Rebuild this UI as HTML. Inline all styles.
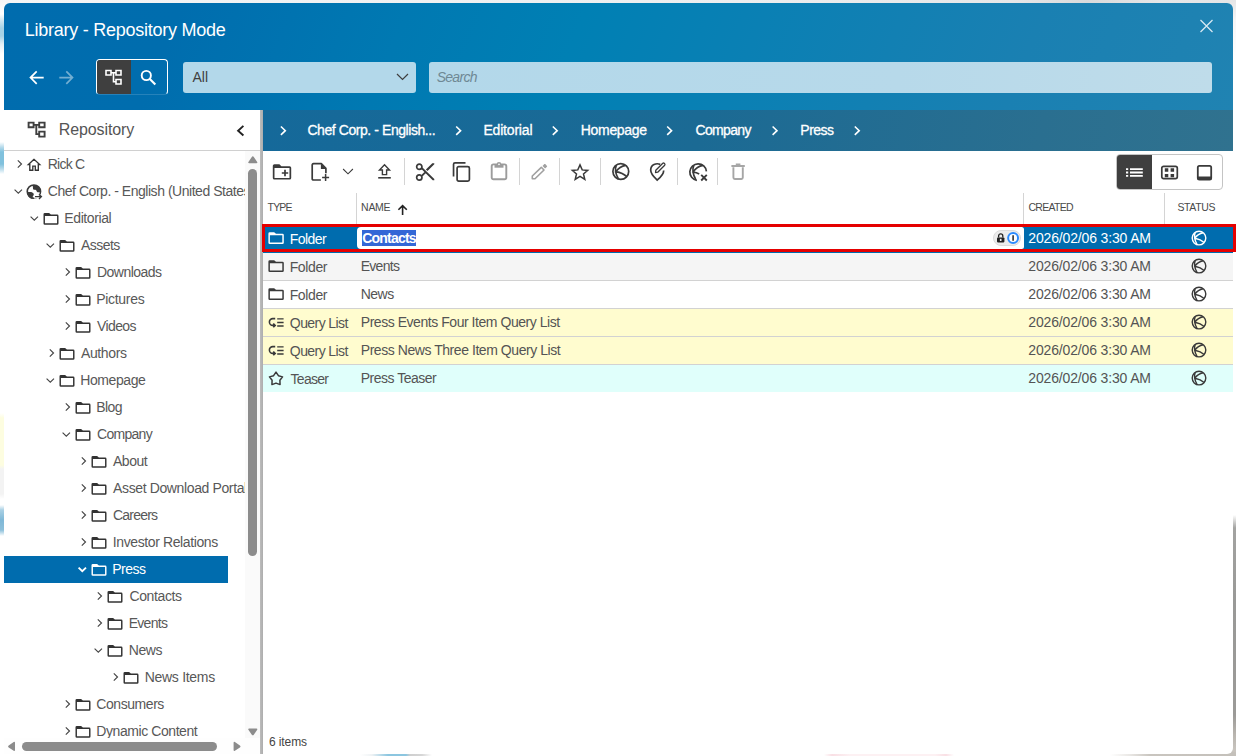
<!DOCTYPE html>
<html lang="en">
<head>
<meta charset="utf-8">
<title>Library - Repository Mode</title>
<style>
*{box-sizing:border-box;margin:0;padding:0}
html,body{width:1236px;height:756px;overflow:hidden;background:#fff;font-family:"Liberation Sans",sans-serif;color:#3f3f3f}
body{position:relative}
.a,.t{position:absolute}
.t{white-space:nowrap}
svg{display:block;overflow:visible;position:absolute}
#bgL{left:0;top:0;width:6px;height:756px;background:linear-gradient(180deg,#f4f5f6 0,#ffffff 14px,#d5e9f2 20px,#a6d2e6 28px,#a6d2e6 36px,#e3eff5 44px,#ffffff 54px,#ffffff 142px,#b9dcec 147px,#80c1dd 152px,#80c1dd 164px,#b9dcec 169px,#ffffff 174px,#ffffff 413px,#fdfde0 418px,#fdfde0 465px,#f3f3f3 469px,#f3f3f3 494px,#ffffff 499px,#ffffff 505px,#a9d0e4 510px,#7fb8d7 520px,#8dc0db 530px,#ffffff 536px,#ffffff 100%)}
#bgT{left:0;top:0;width:1236px;height:5px;background:linear-gradient(90deg,#f4f5f6 0,#eceeef 60%,#e6e7e8 82%,#d9dadb 88%,#e6e7e8 94%,#e4e5e6 100%)}
#bgR{left:1230px;top:0;width:6px;height:756px;background:linear-gradient(180deg,#e4e5e6 0,#f6f6f6 20px,#ffffff 60px,#ffffff 515px,#a3a3a1 528px,#999997 600px,#9b9a97 715px,#b9b5af 735px,#c8c4be 750px,#c8c4be 100%)}
#bgB{left:0;top:752px;width:1236px;height:4px;background:linear-gradient(90deg,#ffffff 0,#ffffff 360px,#eef2f4 372px,#8cc6e0 388px,#8cc6e0 406px,#cfcfcf 410px,#d6d6d6 422px,#ffffff 432px,#ffffff 824px,#f9dfe4 832px,#fdf1f3 850px,#fdf1f3 935px,#f9dfe4 946px,#ffffff 954px,#ffffff 1110px,#e9e7e4 1130px,#c9c5bf 1150px,#c4c0ba 1236px)}
#dlg{left:4px;top:3px;width:1229px;height:751px;border-radius:6px;background:#fff;overflow:hidden}
#hdr{left:0;top:0;width:1229px;height:107px;background:linear-gradient(112deg,#006cae 0%,#006dae 14%,#0079b2 32%,#0080b4 46%,#0a80b4 60%,#1a80b2 82%,#2083b2 100%)}
#bc{left:259.4px;top:107px;width:970px;height:41px;background:linear-gradient(100deg,#15699a 0%,#1b6a94 45%,#2a6f90 80%,#30728f 100%)}
#split{left:256.4px;top:107px;width:3px;height:644px;background:linear-gradient(90deg,#bdbdbd,#adadad)}
#title{font-size:18px;line-height:22px;color:#fff}
.hico{stroke:#fff;fill:none;stroke-width:1.7}
#tgl{left:96px;top:59px;width:72px;height:36px;border:1px solid #fff;border-bottom-color:rgba(255,255,255,.15);border-radius:4px;overflow:hidden}
#tgl .on{left:0;top:0;width:34px;height:34px;background:#3f3f3f}
#cmb{left:183px;top:62px;width:233px;height:31px;background:#b3d8ea;border-radius:3px}
#srch{left:429px;top:62px;width:783px;height:31px;background:linear-gradient(90deg,#b3d8ea 0%,#b7d9ea 60%,#bfdcea 100%);border-radius:3px}
.f14{font-size:14px;line-height:17px}
#lphb{left:4px;top:150px;width:256px;height:1px;background:#d0d0d0}
.bct{font-size:14px;line-height:17px;color:#fff;-webkit-text-stroke:0.3px #fff;top:122px}
.bca{top:125.7px}
/* tree */
#tree{left:4px;top:151px;width:241px;height:587px;overflow:hidden}
.tr{font-size:14px;line-height:27px;height:27px;color:#585858}
#sel{left:0;top:405px;width:224px;height:27px;background:#006cae}
.ar{fill:none;stroke:#444;stroke-width:1.15}
.fo{fill:#333}
/* scrollbars */
#vs{left:245px;top:151px;width:15px;height:587px;background:#fafafa}
#hs{left:4px;top:738px;width:256px;height:16px;background:#fefefe}
.sb{background:#8c8c8c;border-radius:5px}
/* table */
.th{font-size:10.5px;line-height:13px;color:#4a4a4a;top:201px}
.vsep{width:1px;background:#d4d4d4}
.row{left:263px;width:970px;height:28px}
.rl{left:263px;width:970px;height:1px;background:#d2d2d2}
.td{font-size:14px;line-height:17px;color:#545454}
.ti{fill:none;stroke:#3a3a3a;stroke-width:1.5}
.gl{fill:none;stroke:#3a3a3a;stroke-width:1.25}
</style>
</head>
<body>
<div id="bgT" class="a"></div><div id="bgL" class="a"></div><div id="bgR" class="a"></div><div id="bgB" class="a"></div>
<div id="dlg" class="a"><div id="hdr" class="a"></div><div id="bc" class="a"></div><div id="split" class="a"></div></div>
<div id="title" class="t"  style="left:24.64px;top:19px;letter-spacing:-0.246px;">Library - Repository Mode</div>
<svg style="left:28px;top:69px" width="18" height="18" viewBox="0 0 18 18"><g transform="translate(0.70 0.60)"><path class="hico" d="M15 8H2.2M8 1.8L1.8 8L8 14.2"/></g></svg>
<svg style="left:58px;top:69px" width="18" height="18" viewBox="0 0 18 18" opacity=".45"><g transform="translate(0.30 0.60)"><path class="hico" d="M1 8H13.8M8 1.8L14.2 8L8 14.2"/></g></svg>
<div id="tgl" class="a"><div class="on a"></div><svg style="left:8px;top:9px" width="18" height="18" viewBox="0 0 18 18"><path fill="none" stroke="#fff" stroke-width="1.6" d="M1 1.5h5v4.5h-5zM11 1.5h5v4.5h-5zM11 10.5h5v4.5h-5zM6 3.75h5M8.5 3.75v9h2.5"/></svg><svg style="left:42px;top:9px" width="19" height="18" viewBox="0 0 19 18"><g transform="translate(0.80 0.00)"><circle cx="6.5" cy="6.5" r="4.6" fill="none" stroke="#fff" stroke-width="1.9"/><path d="M10 10L15.5 15.5" stroke="#fff" stroke-width="2.1" fill="none"/></g></svg></div>
<div id="cmb" class="a"></div><div id="srch" class="a"></div>
<div id="all" class="t f14" style="left:192.50px;top:69px;letter-spacing:0.000px;">All</div>
<svg style="left:396px;top:73px" width="14" height="9" viewBox="0 0 14 9"><path d="M1 1l5.5 5.5L12 1" fill="none" stroke="#3f3f3f" stroke-width="1.2"/></svg>
<div id="search" class="t f14" style="left:436.70px;top:69px;letter-spacing:-0.720px;color:#6f8894;font-style:italic;">Search</div>
<svg style="left:1200px;top:19px" width="14" height="15" viewBox="0 0 14 15"><g transform="translate(0.00 0.50)"><path d="M0.5 0.5l12 12M12.5 0.5l-12 12" stroke="#d6e9f3" stroke-width="1.25" fill="none"/></g></svg>
<svg style="left:27px;top:121px" width="20" height="18" viewBox="0 0 20 18"><g transform="translate(0.60 0.60)"><path fill="none" stroke="#3f3f3f" stroke-width="1.9" d="M1 1h5v4.6h-5zM11.6 1h5.4v4.6h-5.4zM11.6 10h5.4v5h-5.4zM6 3.3h5.6M8.7 3.3v9.2h2.9"/></g></svg>
<div id="repo" class="t" style="left:58.82px;top:120px;letter-spacing:-0.116px;font-size:16px;line-height:20px;color:#555;">Repository</div>
<svg style="left:236px;top:125px" width="10" height="13" viewBox="0 0 10 13"><g transform="translate(0.50 0.20)"><path d="M6.9 0.7L1.6 5.5l5.3 4.8" fill="none" stroke="#222" stroke-width="1.9"/></g></svg>
<div id="lphb" class="a"></div>
<svg style="left:279px;top:125px" width="9" height="12" viewBox="0 0 9 12"><g transform="translate(0.90 0.70)"><path d="M1 0.8L5.4 5L1 9.2" fill="none" stroke="#fff" stroke-width="1.6"/></g></svg>
<svg style="left:455px;top:125px" width="9" height="12" viewBox="0 0 9 12"><g transform="translate(0.20 0.70)"><path d="M1 0.8L5.4 5L1 9.2" fill="none" stroke="#fff" stroke-width="1.6"/></g></svg>
<svg style="left:551px;top:125px" width="9" height="12" viewBox="0 0 9 12"><g transform="translate(0.80 0.70)"><path d="M1 0.8L5.4 5L1 9.2" fill="none" stroke="#fff" stroke-width="1.6"/></g></svg>
<svg style="left:666px;top:125px" width="9" height="12" viewBox="0 0 9 12"><g transform="translate(0.20 0.70)"><path d="M1 0.8L5.4 5L1 9.2" fill="none" stroke="#fff" stroke-width="1.6"/></g></svg>
<svg style="left:771px;top:125px" width="9" height="12" viewBox="0 0 9 12"><g transform="translate(0.60 0.70)"><path d="M1 0.8L5.4 5L1 9.2" fill="none" stroke="#fff" stroke-width="1.6"/></g></svg>
<svg style="left:853px;top:125px" width="9" height="12" viewBox="0 0 9 12"><g transform="translate(0.80 0.70)"><path d="M1 0.8L5.4 5L1 9.2" fill="none" stroke="#fff" stroke-width="1.6"/></g></svg>
<div id="bc1" class="t bct" style="left:307.44px;top:122px;letter-spacing:-0.431px;">Chef Corp. - English...</div>
<div id="bc2" class="t bct" style="left:483.38px;top:122px;letter-spacing:-0.180px;">Editorial</div>
<div id="bc3" class="t bct" style="left:580.82px;top:122px;letter-spacing:-0.330px;">Homepage</div>
<div id="bc4" class="t bct" style="left:695.56px;top:122px;letter-spacing:-0.666px;">Company</div>
<div id="bc5" class="t bct" style="left:800.32px;top:122px;letter-spacing:-0.520px;">Press</div>
<div id="tree" class="a"><div id="sel" class="a"></div><svg style="left:13px;top:9px" width="7" height="9" viewBox="0 0 7 9"><g transform="translate(0.20 0.00)"><path class="ar" d="M0.6 0.4L4.3 4L0.6 7.6"/></g></svg><svg style="left:22px;top:7px" width="17" height="14" viewBox="0 0 17 14"><g transform="translate(0.80 0.40)"><path fill="none" stroke="#333" stroke-width="1.35" stroke-linejoin="miter" d="M7.25 0.95L1.6 6.1H3V11.8H6V7.7H8.5V11.8H11.5V6.1H12.9Z"/></g></svg><div id="tr0" class="t tr" style="left:43.70px;top:-0.5px;letter-spacing:-0.752px;">Rick C</div><svg style="left:10px;top:38px" width="10" height="6" viewBox="0 0 10 6"><g transform="translate(0.30 0.10)"><path class="ar" d="M0.3 0.5L4 4L7.7 0.5"/></g></svg><svg style="left:22px;top:33px" width="18" height="17" viewBox="0 0 18 17"><g transform="translate(0.40 0.00)"><circle cx="7.5" cy="7.6" r="6.7" fill="#fff" stroke="#3a3a3a" stroke-width="1.5"/><path fill="#3a3a3a" d="M6.6 1.2C10.8 0.6 14.4 3.6 14.6 8.2H11.2C10.6 8.2 10.4 7.6 10.2 7C10 6.2 9.2 5.8 8.2 5.8C7 5.8 6.4 5 6.6 4.2C6.8 3.4 6 2.6 6.6 1.2Z"/><path fill="#3a3a3a" d="M0.6 7.4C2 8 3.4 7.6 4.8 8C6.2 8.4 7.6 9.2 7.4 10.6C7.2 11.8 6.2 12.2 6.2 13.4C6.2 14 6.4 14.6 6.6 15C2.8 14.4 0.2 11 0.6 7.4Z"/><path fill="#fff" d="M7.8 10.8H16V14.6H7.8Z"/><path fill="none" stroke="#3a3a3a" stroke-width="1.35" d="M8.6 12.6H15M12.6 10.4L15 12.6L12.6 14.9"/></g></svg><div id="tr1" class="t tr" style="left:43.82px;top:26.5px;letter-spacing:-0.470px;">Chef Corp. - English (United States)</div><svg style="left:26px;top:65px" width="10" height="6" viewBox="0 0 10 6"><g transform="translate(0.30 0.10)"><path class="ar" d="M0.3 0.5L4 4L7.7 0.5"/></g></svg><svg style="left:39px;top:62px" width="17" height="13" viewBox="0 0 17 13"><g transform="translate(0.50 0.00)"><path fill="#333" fill-rule="evenodd" d="M0 1.3Q0 0 1.3 0H5.6L7.4 1.6H13.7Q15 1.6 15 2.9V10.5Q15 11.8 13.7 11.8H1.3Q0 11.8 0 10.5ZM1.45 3.1V10.35H13.55V3.1Z"/></g></svg><div id="tr2" class="t tr" style="left:60.32px;top:53.5px;letter-spacing:-0.400px;">Editorial</div><svg style="left:42px;top:92px" width="10" height="6" viewBox="0 0 10 6"><g transform="translate(0.30 0.10)"><path class="ar" d="M0.3 0.5L4 4L7.7 0.5"/></g></svg><svg style="left:55px;top:89px" width="17" height="13" viewBox="0 0 17 13"><g transform="translate(0.50 0.00)"><path fill="#333" fill-rule="evenodd" d="M0 1.3Q0 0 1.3 0H5.6L7.4 1.6H13.7Q15 1.6 15 2.9V10.5Q15 11.8 13.7 11.8H1.3Q0 11.8 0 10.5ZM1.45 3.1V10.35H13.55V3.1Z"/></g></svg><div id="tr3" class="t tr" style="left:77.06px;top:80.5px;letter-spacing:-0.560px;">Assets</div><svg style="left:61px;top:117px" width="7" height="9" viewBox="0 0 7 9"><g transform="translate(0.20 0.00)"><path class="ar" d="M0.6 0.4L4.3 4L0.6 7.6"/></g></svg><svg style="left:71px;top:116px" width="17" height="13" viewBox="0 0 17 13"><g transform="translate(0.50 0.00)"><path fill="#333" fill-rule="evenodd" d="M0 1.3Q0 0 1.3 0H5.6L7.4 1.6H13.7Q15 1.6 15 2.9V10.5Q15 11.8 13.7 11.8H1.3Q0 11.8 0 10.5ZM1.45 3.1V10.35H13.55V3.1Z"/></g></svg><div id="tr4" class="t tr" style="left:92.94px;top:107.5px;letter-spacing:-0.520px;">Downloads</div><svg style="left:61px;top:144px" width="7" height="9" viewBox="0 0 7 9"><g transform="translate(0.20 0.00)"><path class="ar" d="M0.6 0.4L4.3 4L0.6 7.6"/></g></svg><svg style="left:71px;top:143px" width="17" height="13" viewBox="0 0 17 13"><g transform="translate(0.50 0.00)"><path fill="#333" fill-rule="evenodd" d="M0 1.3Q0 0 1.3 0H5.6L7.4 1.6H13.7Q15 1.6 15 2.9V10.5Q15 11.8 13.7 11.8H1.3Q0 11.8 0 10.5ZM1.45 3.1V10.35H13.55V3.1Z"/></g></svg><div id="tr5" class="t tr" style="left:92.26px;top:134.5px;letter-spacing:-0.308px;">Pictures</div><svg style="left:61px;top:171px" width="7" height="9" viewBox="0 0 7 9"><g transform="translate(0.20 0.00)"><path class="ar" d="M0.6 0.4L4.3 4L0.6 7.6"/></g></svg><svg style="left:71px;top:170px" width="17" height="13" viewBox="0 0 17 13"><g transform="translate(0.50 0.00)"><path fill="#333" fill-rule="evenodd" d="M0 1.3Q0 0 1.3 0H5.6L7.4 1.6H13.7Q15 1.6 15 2.9V10.5Q15 11.8 13.7 11.8H1.3Q0 11.8 0 10.5ZM1.45 3.1V10.35H13.55V3.1Z"/></g></svg><div id="tr6" class="t tr" style="left:93.06px;top:161.5px;letter-spacing:-0.624px;">Videos</div><svg style="left:45px;top:198px" width="7" height="9" viewBox="0 0 7 9"><g transform="translate(0.20 0.00)"><path class="ar" d="M0.6 0.4L4.3 4L0.6 7.6"/></g></svg><svg style="left:55px;top:197px" width="17" height="13" viewBox="0 0 17 13"><g transform="translate(0.50 0.00)"><path fill="#333" fill-rule="evenodd" d="M0 1.3Q0 0 1.3 0H5.6L7.4 1.6H13.7Q15 1.6 15 2.9V10.5Q15 11.8 13.7 11.8H1.3Q0 11.8 0 10.5ZM1.45 3.1V10.35H13.55V3.1Z"/></g></svg><div id="tr7" class="t tr" style="left:77.06px;top:188.5px;letter-spacing:-0.400px;">Authors</div><svg style="left:42px;top:227px" width="10" height="6" viewBox="0 0 10 6"><g transform="translate(0.30 0.10)"><path class="ar" d="M0.3 0.5L4 4L7.7 0.5"/></g></svg><svg style="left:55px;top:224px" width="17" height="13" viewBox="0 0 17 13"><g transform="translate(0.50 0.00)"><path fill="#333" fill-rule="evenodd" d="M0 1.3Q0 0 1.3 0H5.6L7.4 1.6H13.7Q15 1.6 15 2.9V10.5Q15 11.8 13.7 11.8H1.3Q0 11.8 0 10.5ZM1.45 3.1V10.35H13.55V3.1Z"/></g></svg><div id="tr8" class="t tr" style="left:76.26px;top:215.5px;letter-spacing:-0.423px;">Homepage</div><svg style="left:61px;top:252px" width="7" height="9" viewBox="0 0 7 9"><g transform="translate(0.20 0.00)"><path class="ar" d="M0.6 0.4L4.3 4L0.6 7.6"/></g></svg><svg style="left:71px;top:251px" width="17" height="13" viewBox="0 0 17 13"><g transform="translate(0.50 0.00)"><path fill="#333" fill-rule="evenodd" d="M0 1.3Q0 0 1.3 0H5.6L7.4 1.6H13.7Q15 1.6 15 2.9V10.5Q15 11.8 13.7 11.8H1.3Q0 11.8 0 10.5ZM1.45 3.1V10.35H13.55V3.1Z"/></g></svg><div id="tr9" class="t tr" style="left:92.26px;top:242.5px;letter-spacing:-0.612px;">Blog</div><svg style="left:58px;top:281px" width="10" height="6" viewBox="0 0 10 6"><g transform="translate(0.30 0.10)"><path class="ar" d="M0.3 0.5L4 4L7.7 0.5"/></g></svg><svg style="left:71px;top:278px" width="17" height="13" viewBox="0 0 17 13"><g transform="translate(0.50 0.00)"><path fill="#333" fill-rule="evenodd" d="M0 1.3Q0 0 1.3 0H5.6L7.4 1.6H13.7Q15 1.6 15 2.9V10.5Q15 11.8 13.7 11.8H1.3Q0 11.8 0 10.5ZM1.45 3.1V10.35H13.55V3.1Z"/></g></svg><div id="tr10" class="t tr" style="left:93.06px;top:269.5px;letter-spacing:-0.719px;">Company</div><svg style="left:77px;top:306px" width="7" height="9" viewBox="0 0 7 9"><g transform="translate(0.20 0.00)"><path class="ar" d="M0.6 0.4L4.3 4L0.6 7.6"/></g></svg><svg style="left:87px;top:305px" width="17" height="13" viewBox="0 0 17 13"><g transform="translate(0.50 0.00)"><path fill="#333" fill-rule="evenodd" d="M0 1.3Q0 0 1.3 0H5.6L7.4 1.6H13.7Q15 1.6 15 2.9V10.5Q15 11.8 13.7 11.8H1.3Q0 11.8 0 10.5ZM1.45 3.1V10.35H13.55V3.1Z"/></g></svg><div id="tr11" class="t tr" style="left:109.06px;top:296.5px;letter-spacing:-0.520px;">About</div><svg style="left:77px;top:333px" width="7" height="9" viewBox="0 0 7 9"><g transform="translate(0.20 0.00)"><path class="ar" d="M0.6 0.4L4.3 4L0.6 7.6"/></g></svg><svg style="left:87px;top:332px" width="17" height="13" viewBox="0 0 17 13"><g transform="translate(0.50 0.00)"><path fill="#333" fill-rule="evenodd" d="M0 1.3Q0 0 1.3 0H5.6L7.4 1.6H13.7Q15 1.6 15 2.9V10.5Q15 11.8 13.7 11.8H1.3Q0 11.8 0 10.5ZM1.45 3.1V10.35H13.55V3.1Z"/></g></svg><div id="tr12" class="t tr" style="left:109.06px;top:323.5px;letter-spacing:-0.375px;">Asset Download Portal</div><svg style="left:77px;top:360px" width="7" height="9" viewBox="0 0 7 9"><g transform="translate(0.20 0.00)"><path class="ar" d="M0.6 0.4L4.3 4L0.6 7.6"/></g></svg><svg style="left:87px;top:359px" width="17" height="13" viewBox="0 0 17 13"><g transform="translate(0.50 0.00)"><path fill="#333" fill-rule="evenodd" d="M0 1.3Q0 0 1.3 0H5.6L7.4 1.6H13.7Q15 1.6 15 2.9V10.5Q15 11.8 13.7 11.8H1.3Q0 11.8 0 10.5ZM1.45 3.1V10.35H13.55V3.1Z"/></g></svg><div id="tr13" class="t tr" style="left:109.06px;top:350.5px;letter-spacing:-0.800px;">Careers</div><svg style="left:77px;top:387px" width="7" height="9" viewBox="0 0 7 9"><g transform="translate(0.20 0.00)"><path class="ar" d="M0.6 0.4L4.3 4L0.6 7.6"/></g></svg><svg style="left:87px;top:386px" width="17" height="13" viewBox="0 0 17 13"><g transform="translate(0.50 0.00)"><path fill="#333" fill-rule="evenodd" d="M0 1.3Q0 0 1.3 0H5.6L7.4 1.6H13.7Q15 1.6 15 2.9V10.5Q15 11.8 13.7 11.8H1.3Q0 11.8 0 10.5ZM1.45 3.1V10.35H13.55V3.1Z"/></g></svg><div id="tr14" class="t tr" style="left:108.80px;top:377.5px;letter-spacing:-0.393px;">Investor Relations</div><svg style="left:74px;top:416px" width="10" height="6" viewBox="0 0 10 6"><g transform="translate(0.30 0.10)"><path class="ar" style="stroke:#fff;stroke-width:1.9" d="M0.3 0.5L4 4L7.7 0.5"/></g></svg><svg style="left:87px;top:413px" width="17" height="13" viewBox="0 0 17 13"><g transform="translate(0.50 0.00)"><path fill="#fff" fill-rule="evenodd" d="M0 1.3Q0 0 1.3 0H5.6L7.4 1.6H13.7Q15 1.6 15 2.9V10.5Q15 11.8 13.7 11.8H1.3Q0 11.8 0 10.5ZM1.45 3.1V10.35H13.55V3.1Z"/></g></svg><div id="tr15" class="t tr" style="left:108.20px;top:404.5px;letter-spacing:-0.520px;color:#fff;">Press</div><svg style="left:93px;top:441px" width="7" height="9" viewBox="0 0 7 9"><g transform="translate(0.20 0.00)"><path class="ar" d="M0.6 0.4L4.3 4L0.6 7.6"/></g></svg><svg style="left:103px;top:440px" width="17" height="13" viewBox="0 0 17 13"><g transform="translate(0.50 0.00)"><path fill="#333" fill-rule="evenodd" d="M0 1.3Q0 0 1.3 0H5.6L7.4 1.6H13.7Q15 1.6 15 2.9V10.5Q15 11.8 13.7 11.8H1.3Q0 11.8 0 10.5ZM1.45 3.1V10.35H13.55V3.1Z"/></g></svg><div id="tr16" class="t tr" style="left:125.44px;top:431.5px;letter-spacing:-0.377px;">Contacts</div><svg style="left:93px;top:468px" width="7" height="9" viewBox="0 0 7 9"><g transform="translate(0.20 0.00)"><path class="ar" d="M0.6 0.4L4.3 4L0.6 7.6"/></g></svg><svg style="left:103px;top:467px" width="17" height="13" viewBox="0 0 17 13"><g transform="translate(0.50 0.00)"><path fill="#333" fill-rule="evenodd" d="M0 1.3Q0 0 1.3 0H5.6L7.4 1.6H13.7Q15 1.6 15 2.9V10.5Q15 11.8 13.7 11.8H1.3Q0 11.8 0 10.5ZM1.45 3.1V10.35H13.55V3.1Z"/></g></svg><div id="tr17" class="t tr" style="left:124.64px;top:458.5px;letter-spacing:-0.688px;">Events</div><svg style="left:90px;top:497px" width="10" height="6" viewBox="0 0 10 6"><g transform="translate(0.30 0.10)"><path class="ar" d="M0.3 0.5L4 4L7.7 0.5"/></g></svg><svg style="left:103px;top:494px" width="17" height="13" viewBox="0 0 17 13"><g transform="translate(0.50 0.00)"><path fill="#333" fill-rule="evenodd" d="M0 1.3Q0 0 1.3 0H5.6L7.4 1.6H13.7Q15 1.6 15 2.9V10.5Q15 11.8 13.7 11.8H1.3Q0 11.8 0 10.5ZM1.45 3.1V10.35H13.55V3.1Z"/></g></svg><div id="tr18" class="t tr" style="left:124.64px;top:485.5px;letter-spacing:-0.345px;">News</div><svg style="left:109px;top:522px" width="7" height="9" viewBox="0 0 7 9"><g transform="translate(0.20 0.00)"><path class="ar" d="M0.6 0.4L4.3 4L0.6 7.6"/></g></svg><svg style="left:119px;top:521px" width="17" height="13" viewBox="0 0 17 13"><g transform="translate(0.50 0.00)"><path fill="#333" fill-rule="evenodd" d="M0 1.3Q0 0 1.3 0H5.6L7.4 1.6H13.7Q15 1.6 15 2.9V10.5Q15 11.8 13.7 11.8H1.3Q0 11.8 0 10.5ZM1.45 3.1V10.35H13.55V3.1Z"/></g></svg><div id="tr19" class="t tr" style="left:140.64px;top:512.5px;letter-spacing:-0.277px;">News Items</div><svg style="left:61px;top:549px" width="7" height="9" viewBox="0 0 7 9"><g transform="translate(0.20 0.00)"><path class="ar" d="M0.6 0.4L4.3 4L0.6 7.6"/></g></svg><svg style="left:71px;top:548px" width="17" height="13" viewBox="0 0 17 13"><g transform="translate(0.50 0.00)"><path fill="#333" fill-rule="evenodd" d="M0 1.3Q0 0 1.3 0H5.6L7.4 1.6H13.7Q15 1.6 15 2.9V10.5Q15 11.8 13.7 11.8H1.3Q0 11.8 0 10.5ZM1.45 3.1V10.35H13.55V3.1Z"/></g></svg><div id="tr20" class="t tr" style="left:92.32px;top:539.5px;letter-spacing:-0.440px;">Consumers</div><svg style="left:61px;top:576px" width="7" height="9" viewBox="0 0 7 9"><g transform="translate(0.20 0.00)"><path class="ar" d="M0.6 0.4L4.3 4L0.6 7.6"/></g></svg><svg style="left:71px;top:575px" width="17" height="13" viewBox="0 0 17 13"><g transform="translate(0.50 0.00)"><path fill="#333" fill-rule="evenodd" d="M0 1.3Q0 0 1.3 0H5.6L7.4 1.6H13.7Q15 1.6 15 2.9V10.5Q15 11.8 13.7 11.8H1.3Q0 11.8 0 10.5ZM1.45 3.1V10.35H13.55V3.1Z"/></g></svg><div id="tr21" class="t tr" style="left:92.32px;top:566.5px;letter-spacing:-0.426px;">Dynamic Content</div></div>
<div id="vs" class="a"></div><div id="hs" class="a"></div>
<svg style="left:248px;top:156px" width="11" height="9" viewBox="0 0 11 9"><path fill="#8c8c8c" d="M4.8 0.3Q5.4 0.3 5.8 0.9L9.2 5.9Q9.8 7.2 8.4 7.2H1.2Q-0.2 7.2 0.4 5.9L3.8 0.9Q4.2 0.3 4.8 0.3Z"/></svg>
<svg style="left:248px;top:728px" width="11" height="9" viewBox="0 0 11 9"><g transform="translate(0.00 0.20)"><path fill="#8c8c8c" d="M4.8 7.1Q5.4 7.1 5.8 6.5L9.2 1.5Q9.8 0.2 8.4 0.2H1.2Q-0.2 0.2 0.4 1.5L3.8 6.5Q4.2 7.1 4.8 7.1Z"/></g></svg>
<div class="a sb" style="left:248.2px;top:169px;width:9.3px;height:387px"></div>
<svg style="left:7px;top:741px" width="10" height="12" viewBox="0 0 10 12"><g transform="translate(0.80 0.60)"><path fill="#8c8c8c" d="M0.3 4.8Q0.3 4.2 0.9 3.8L5.9 0.4Q7.2 -0.2 7.2 1.2V8.4Q7.2 9.8 5.9 9.2L0.9 5.8Q0.3 5.4 0.3 4.8Z"/></g></svg>
<svg style="left:233px;top:741px" width="9" height="12" viewBox="0 0 9 12"><g transform="translate(0.20 0.60)"><path fill="#8c8c8c" d="M7.3 4.8Q7.3 4.2 6.7 3.8L1.7 0.4Q0.4 -0.2 0.4 1.2V8.4Q0.4 9.8 1.7 9.2L6.7 5.8Q7.3 5.4 7.3 4.8Z"/></g></svg>
<div class="a sb" style="left:21.8px;top:742.2px;width:194.8px;height:8.4px"></div>
<div class="a vsep" style="left:404px;top:158px;height:27px"></div>
<div class="a vsep" style="left:519px;top:158px;height:27px"></div>
<div class="a vsep" style="left:559px;top:158px;height:27px"></div>
<div class="a vsep" style="left:600px;top:158px;height:27px"></div>
<div class="a vsep" style="left:677px;top:158px;height:27px"></div>
<div class="a vsep" style="left:717px;top:158px;height:27px"></div>
<svg style="left:272px;top:164px" width="21" height="17" viewBox="0 0 21 17"><g transform="translate(0.80 0.20)"><path fill="#3a3a3a" fill-rule="evenodd" d="M0 1.6Q0 0 1.6 0H6.6L8.6 2H16.8Q18.4 2 18.4 3.6V13.8Q18.4 15.4 16.8 15.4H1.6Q0 15.4 0 13.8ZM1.7 3.7V13.7H16.7V3.7Z"/><path stroke="#3a3a3a" stroke-width="1.7" fill="none" d="M9 8.8H15.4M12.2 5.6V12"/></g></svg>
<svg style="left:311px;top:162px" width="20" height="21" viewBox="0 0 20 21"><g transform="translate(0.30 0.80)"><path fill="none" stroke="#3a3a3a" stroke-width="1.7" stroke-linejoin="round" d="M9.6 17.2H2.2Q0.9 17.2 0.9 15.9V2.2Q0.9 0.9 2.2 0.9H10L14.6 5.5V10.4"/><path fill="#3a3a3a" d="M9.6 0.9L14.9 6.2H9.6Z"/><path stroke="#3a3a3a" stroke-width="1.5" fill="none" d="M10.8 14.8H17.8M14.3 11.3V18.3"/></g></svg>
<svg style="left:342px;top:168px" width="13" height="8" viewBox="0 0 13 8"><g transform="translate(0.70 0.60)"><path fill="none" stroke="#3a3a3a" stroke-width="1.05" d="M0.4 0.4L5.3 5.2L10.2 0.4"/></g></svg>
<svg style="left:378px;top:163px" width="14" height="17" viewBox="0 0 14 17"><g transform="translate(0.20 0.80)"><path fill="none" stroke="#3a3a3a" stroke-width="1.4" stroke-linejoin="miter" d="M6.3 1L11.3 6.2H8.4V10.8H4.2V6.2H1.3Z"/><path stroke="#3a3a3a" stroke-width="1.6" d="M0 14H12.6"/></g></svg>
<svg style="left:415px;top:162px" width="21" height="21" viewBox="0 0 21 21"><g transform="translate(0.60 0.80)"><g fill="none" stroke="#3a3a3a" stroke-width="1.7"><circle cx="3.7" cy="4" r="2.65"/><circle cx="3.7" cy="14.7" r="2.65"/></g><path fill="#3a3a3a" d="M5.5 6L6.9 4.7L18.7 16.3V17.5H17.1ZM10.3 6.7L16.7 0.5H18.7V1.5L11.9 8.3ZM5.5 12.5L8.8 9.2L10.1 10.5L6.9 13.8Z"/></g></svg>
<svg style="left:452px;top:162px" width="20" height="21" viewBox="0 0 20 21"><g transform="translate(0.70 0.00)"><g fill="none" stroke="#3a3a3a" stroke-width="1.7"><rect x="4.4" y="4.6" width="12.3" height="14.5" rx="1.6"/><path d="M0.85 14.4V2.3Q0.85 0.85 2.3 0.85H12.8"/></g></g></svg>
<svg style="left:490px;top:161px" width="19" height="21" viewBox="0 0 19 21"><g transform="translate(0.60 0.40)"><rect x="1.1" y="3" width="14.6" height="14.9" rx="1.8" fill="none" stroke="#9c9c9c" stroke-width="1.9"/><path fill="#9c9c9c" d="M3.9 3H12.9V6.3H3.9Z"/><circle cx="8.4" cy="2.9" r="1.6" fill="#fff" stroke="#9c9c9c" stroke-width="1.5"/></g></svg>
<svg style="left:531px;top:163px" width="18" height="18" viewBox="0 0 18 18"><g transform="translate(0.30 0.30)"><path fill="none" stroke="#a0a0a0" stroke-width="1.6" stroke-linejoin="round" d="M1 15.5V12.7L10 4L12.7 6.7L3.7 15.5Z"/><path fill="#a0a0a0" d="M11.2 2.7L13.1 0.8Q13.5 0.4 13.9 0.8L15.7 2.6Q16.1 3 15.7 3.4L13.8 5.3Z"/></g></svg>
<svg style="left:571px;top:163px" width="19" height="19" viewBox="0 0 19 19"><g transform="translate(0.00 0.30)"><path fill="none" stroke="#3a3a3a" stroke-width="1.5" stroke-linejoin="miter" d="M9 1.6L11.2 6.6L16.7 7.1L12.5 10.7L13.8 16L9 13.1L4.2 16L5.5 10.7L1.3 7.1L6.8 6.6Z"/></g></svg>
<svg style="left:611px;top:162px" width="20" height="20" viewBox="0 0 20 20"><g transform="translate(0.80 0.50)"><g fill="none" stroke="#3a3a3a" stroke-width="1.7"><circle cx="9" cy="9" r="7.9"/><path d="M13.8 2.8C10.2 3.4 6.4 5.8 4 9.2C7.6 9.9 12.2 11.6 15 14.2M4.4 2.9C3 6.6 3.9 11.6 6.5 16.2"/></g></g></svg>
<svg style="left:649px;top:162px" width="18" height="21" viewBox="0 0 18 21"><g transform="translate(0.80 0.10)"><path fill="none" stroke="#3a3a3a" stroke-width="1.7" d="M10.4 2.3C6.6 0.6 0.9 2.6 0.9 8C0.9 12.4 4.6 15.4 7.4 18C10.4 15.4 13.9 12.6 13.9 8.4"/><path fill="none" stroke="#3a3a3a" stroke-width="1.3" stroke-linejoin="round" d="M6 8.2L13 1.2Q13.7 0.6 14.4 1.2L14.9 1.7Q15.5 2.4 14.9 3.1L7.9 10.1L5.7 10.4Z"/></g></svg>
<svg style="left:689px;top:163px" width="20" height="20" viewBox="0 0 20 20"><g fill="none" stroke="#3a3a3a" stroke-width="1.7"><path d="M7.9 17.3A8.3 8.3 0 1 1 17.4 8.4"/><path d="M14 2.4C10.4 3 6.6 5.4 4.2 9C6.2 9.4 8.4 10.1 10.2 11M4.8 2.4C3.2 6.2 4 11.4 6.6 16.2"/></g><path stroke="#3a3a3a" stroke-width="1.9" fill="none" d="M12.2 11.9L17.8 17.5M17.8 11.9L12.2 17.5"/></svg>
<svg style="left:731px;top:163px" width="15" height="18" viewBox="0 0 15 18"><g transform="translate(0.40 0.60)"><g fill="none" stroke="#a6a6a6" stroke-width="1.9"><path d="M2 3.6V14Q2 15.4 3.4 15.4H10Q11.4 15.4 11.4 14V3.6"/><path d="M0 2.4H13.4M4.4 0.8H9"/></g></g></svg>
<div class="a" style="left:1116.4px;top:154px;width:106.2px;height:35.5px;border:1px solid #c4c4c4;border-radius:4px;background:#fff;overflow:hidden"><div class="a" style="left:-1px;top:-1px;width:35.6px;height:36px;background:#3f3f3f"></div></div>
<svg style="left:1126px;top:168px" width="18" height="10" viewBox="0 0 18 10"><path fill="#fff" d="M0 0.2H2.2V2.1H0ZM0 3.55H2.2V5.45H0ZM0 6.9H2.2V8.8H0ZM4 0.2H16.8V2.1H4ZM4 3.55H16.8V5.45H4ZM4 6.9H16.8V8.8H4Z"/></svg>
<svg style="left:1161px;top:165px" width="18" height="16" viewBox="0 0 18 16"><rect x="0.8" y="1.3" width="15.5" height="12.3" rx="1.8" fill="none" stroke="#3a3a3a" stroke-width="1.7"/><path fill="#3a3a3a" d="M3.8 3.3H7.3V6.7H3.8ZM9.6 3.3H13.1V6.7H9.6ZM3.8 8.9H7.3V12.2H3.8ZM9.6 8.9H13.1V12.2H9.6Z"/></svg>
<svg style="left:1196px;top:164px" width="18" height="18" viewBox="0 0 18 18"><g transform="translate(0.90 0.90)"><rect x="0.9" y="0.9" width="13.4" height="13.8" rx="1.6" fill="none" stroke="#3a3a3a" stroke-width="1.8"/><path fill="#3a3a3a" d="M0.9 11.6H14.3V14.7H0.9Z"/></g></svg>
<div class="a vsep" style="left:356px;top:193px;height:31px"></div>
<div class="a vsep" style="left:1023px;top:193px;height:31px"></div>
<div class="a vsep" style="left:1164px;top:193px;height:31px"></div>
<div id="thT" class="t th" style="left:267.50px;top:201px;letter-spacing:-0.773px;">TYPE</div>
<div id="thN" class="t th" style="left:361.12px;top:201px;letter-spacing:-0.293px;">NAME</div>
<svg style="left:397px;top:204px" width="12" height="13" viewBox="0 0 12 13"><g transform="translate(0.60 0.40)"><path fill="none" stroke="#222" stroke-width="1.6" d="M5 10.6V1.4M0.8 5.4L5 1.2L9.2 5.4"/></g></svg>
<div id="thC" class="t th" style="left:1028.42px;top:201px;letter-spacing:-0.693px;">CREATED</div>
<div id="thS" class="t th" style="left:1177.42px;top:201px;letter-spacing:-0.368px;">STATUS</div>
<div class="a" style="left:263px;top:224px;width:970px;height:29.6px;background:#006cae"></div>
<div class="a" style="left:357px;top:227px;width:667px;height:22px;background:#fff;border-radius:4px 2.5px 2.5px 4px"></div>
<div class="a" style="left:362px;top:230px;width:54px;height:16px;background:#3367d6"></div>
<svg style="left:268px;top:232px" width="17" height="14" viewBox="0 0 17 14"><g transform="translate(0.40 0.20) scale(1.0267 1.0000)"><path fill="#fff" fill-rule="evenodd" d="M0 1.3Q0 0 1.3 0H5.6L7.4 1.6H13.7Q15 1.6 15 2.9V10.5Q15 11.8 13.7 11.8H1.3Q0 11.8 0 10.5ZM1.45 3.1V10.35H13.55V3.1Z"/></g></svg>
<div id="ty0" class="t td" style="left:289.70px;top:231.0px;letter-spacing:-0.528px;color:#fff;">Folder</div>
<div id="nm0" class="t td" style="left:362.30px;top:230.4px;letter-spacing:-0.800px;color:#fff;font-weight:bold;">Contacts</div>
<div class="a" style="left:993px;top:230.2px;width:28px;height:15.4px;border-radius:8px;background:#ececec;border:1px solid #dcdcdc"></div>
<svg style="left:996px;top:233px" width="11" height="11" viewBox="0 0 11 11"><g transform="translate(0.20 0.00)"><path fill="none" stroke="#222" stroke-width="1.3" d="M2.4 4.6V3A2.1 2.1 0 0 1 6.6 3V4.6"/><rect x="0.8" y="4.4" width="7.4" height="5" rx="0.8" fill="#222"/><rect x="3.7" y="5.8" width="1.6" height="2.2" fill="#ececec"/></g></svg>
<svg style="left:1007px;top:232px" width="14" height="13" viewBox="0 0 14 13"><g transform="translate(0.10 0.00)"><circle cx="6" cy="6" r="4.95" fill="#fff" stroke="#2b8bff" stroke-width="2"/><path stroke="#222" stroke-width="1.5" d="M6 3.2V8.8"/></g></svg>
<div id="dt0" class="t td" style="left:1028.32px;top:229.6px;letter-spacing:-0.154px;color:#fff;">2026/02/06 3:30 AM</div>
<svg style="left:1191px;top:230px" width="17" height="17" viewBox="0 0 17 17"><g transform="translate(0.50 0.60)"><g fill="none" stroke="#fff" stroke-width="1.4"><circle cx="7.5" cy="7.5" r="6.8"/><path d="M11.6 2.1C8.6 2.6 5.4 4.6 3.4 7.6C6.4 8.2 10.2 9.6 12.6 11.8M3.6 2.2C2.4 5.4 3.2 9.6 5.4 13.6"/></g></g></svg>
<div class="a row" style="top:253px;background:#f5f5f5"></div>
<div class="a rl" style="top:280px"></div>
<svg style="left:268px;top:260px" width="17" height="14" viewBox="0 0 17 14"><g transform="translate(0.40 0.20) scale(1.0267 1.0000)"><path fill="#3a3a3a" fill-rule="evenodd" d="M0 1.3Q0 0 1.3 0H5.6L7.4 1.6H13.7Q15 1.6 15 2.9V10.5Q15 11.8 13.7 11.8H1.3Q0 11.8 0 10.5ZM1.45 3.1V10.35H13.55V3.1Z"/></g></svg>
<div id="ty1" class="t td" style="left:289.70px;top:259.0px;letter-spacing:-0.368px;">Folder</div>
<div id="nm1" class="t td" style="left:360.64px;top:257.6px;letter-spacing:-0.688px;">Events</div>
<div id="dt1" class="t td" style="left:1028.32px;top:257.6px;letter-spacing:-0.154px;">2026/02/06 3:30 AM</div>
<svg style="left:1191px;top:258px" width="17" height="17" viewBox="0 0 17 17"><g transform="translate(0.50 0.60)"><g fill="none" stroke="#3a3a3a" stroke-width="1.4"><circle cx="7.5" cy="7.5" r="6.8"/><path d="M11.6 2.1C8.6 2.6 5.4 4.6 3.4 7.6C6.4 8.2 10.2 9.6 12.6 11.8M3.6 2.2C2.4 5.4 3.2 9.6 5.4 13.6"/></g></g></svg>
<div class="a row" style="top:281px;background:#ffffff"></div>
<div class="a rl" style="top:308px"></div>
<svg style="left:268px;top:288px" width="17" height="14" viewBox="0 0 17 14"><g transform="translate(0.40 0.20) scale(1.0267 1.0000)"><path fill="#3a3a3a" fill-rule="evenodd" d="M0 1.3Q0 0 1.3 0H5.6L7.4 1.6H13.7Q15 1.6 15 2.9V10.5Q15 11.8 13.7 11.8H1.3Q0 11.8 0 10.5ZM1.45 3.1V10.35H13.55V3.1Z"/></g></svg>
<div id="ty2" class="t td" style="left:289.70px;top:287.0px;letter-spacing:-0.368px;">Folder</div>
<div id="nm2" class="t td" style="left:360.64px;top:285.6px;letter-spacing:-0.455px;">News</div>
<div id="dt2" class="t td" style="left:1028.32px;top:285.6px;letter-spacing:-0.154px;">2026/02/06 3:30 AM</div>
<svg style="left:1191px;top:286px" width="17" height="17" viewBox="0 0 17 17"><g transform="translate(0.50 0.60)"><g fill="none" stroke="#3a3a3a" stroke-width="1.4"><circle cx="7.5" cy="7.5" r="6.8"/><path d="M11.6 2.1C8.6 2.6 5.4 4.6 3.4 7.6C6.4 8.2 10.2 9.6 12.6 11.8M3.6 2.2C2.4 5.4 3.2 9.6 5.4 13.6"/></g></g></svg>
<div class="a row" style="top:309px;background:#fffccf"></div>
<div class="a rl" style="top:336px"></div>
<svg style="left:268px;top:317px" width="18" height="13" viewBox="0 0 18 13"><g transform="translate(0.60 0.40)"><g fill="none" stroke="#3a3a3a" stroke-width="1.6"><path d="M6.6 1.2H4.2A3.4 3.4 0 0 0 4.2 8H6.2M4.7 6.1L6.6 8L4.7 9.9"/><path d="M8.6 1.5H15M8.6 5.1H15M8.6 8.7H15" stroke-width="1.45"/></g></g></svg>
<div id="ty3" class="t td" style="left:289.82px;top:315.0px;letter-spacing:-0.577px;">Query List</div>
<div id="nm3" class="t td" style="left:360.76px;top:313.6px;letter-spacing:-0.455px;">Press Events Four Item Query List</div>
<div id="dt3" class="t td" style="left:1028.32px;top:313.6px;letter-spacing:-0.154px;">2026/02/06 3:30 AM</div>
<svg style="left:1191px;top:314px" width="17" height="17" viewBox="0 0 17 17"><g transform="translate(0.50 0.60)"><g fill="none" stroke="#3a3a3a" stroke-width="1.4"><circle cx="7.5" cy="7.5" r="6.8"/><path d="M11.6 2.1C8.6 2.6 5.4 4.6 3.4 7.6C6.4 8.2 10.2 9.6 12.6 11.8M3.6 2.2C2.4 5.4 3.2 9.6 5.4 13.6"/></g></g></svg>
<div class="a row" style="top:337px;background:#fffccf"></div>
<div class="a rl" style="top:364px"></div>
<svg style="left:268px;top:345px" width="18" height="13" viewBox="0 0 18 13"><g transform="translate(0.60 0.40)"><g fill="none" stroke="#3a3a3a" stroke-width="1.6"><path d="M6.6 1.2H4.2A3.4 3.4 0 0 0 4.2 8H6.2M4.7 6.1L6.6 8L4.7 9.9"/><path d="M8.6 1.5H15M8.6 5.1H15M8.6 8.7H15" stroke-width="1.45"/></g></g></svg>
<div id="ty4" class="t td" style="left:289.82px;top:343.0px;letter-spacing:-0.577px;">Query List</div>
<div id="nm4" class="t td" style="left:360.76px;top:341.6px;letter-spacing:-0.445px;">Press News Three Item Query List</div>
<div id="dt4" class="t td" style="left:1028.32px;top:341.6px;letter-spacing:-0.154px;">2026/02/06 3:30 AM</div>
<svg style="left:1191px;top:342px" width="17" height="17" viewBox="0 0 17 17"><g transform="translate(0.50 0.60)"><g fill="none" stroke="#3a3a3a" stroke-width="1.4"><circle cx="7.5" cy="7.5" r="6.8"/><path d="M11.6 2.1C8.6 2.6 5.4 4.6 3.4 7.6C6.4 8.2 10.2 9.6 12.6 11.8M3.6 2.2C2.4 5.4 3.2 9.6 5.4 13.6"/></g></g></svg>
<div class="a row" style="top:365px;background:#e0fffb;height:26.6px"></div>
<svg style="left:268px;top:371px" width="17" height="16" viewBox="0 0 17 16"><g transform="translate(0.40 0.10)"><path fill="none" stroke="#3a3a3a" stroke-width="1.5" stroke-linejoin="round" d="M7.60 1.00L10.01 4.58L14.16 5.77L11.50 9.17L11.66 13.48L7.60 12.00L3.54 13.48L3.70 9.17L1.04 5.77L5.19 4.58Z"/></g></svg>
<div id="ty5" class="t td" style="left:290.62px;top:371.0px;letter-spacing:-0.752px;">Teaser</div>
<div id="nm5" class="t td" style="left:360.76px;top:369.6px;letter-spacing:-0.503px;">Press Teaser</div>
<div id="dt5" class="t td" style="left:1028.32px;top:369.6px;letter-spacing:-0.154px;">2026/02/06 3:30 AM</div>
<svg style="left:1191px;top:370px" width="17" height="17" viewBox="0 0 17 17"><g transform="translate(0.50 0.60)"><g fill="none" stroke="#3a3a3a" stroke-width="1.4"><circle cx="7.5" cy="7.5" r="6.8"/><path d="M11.6 2.1C8.6 2.6 5.4 4.6 3.4 7.6C6.4 8.2 10.2 9.6 12.6 11.8M3.6 2.2C2.4 5.4 3.2 9.6 5.4 13.6"/></g></g></svg>
<div class="a" style="left:262px;top:224px;width:974px;height:28px;border:3px solid #e50000"></div>
<div id="foot" class="t" style="left:268.88px;top:735px;letter-spacing:-0.081px;font-size:12px;line-height:14px;color:#444;">6 items</div>
</body>
</html>
